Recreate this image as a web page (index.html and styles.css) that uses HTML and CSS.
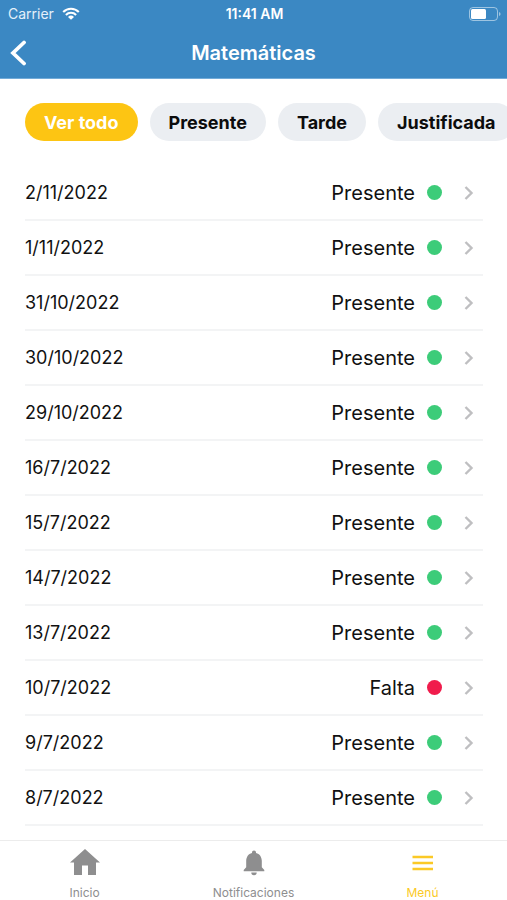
FILE: index.html
```html
<!DOCTYPE html>
<html lang="es">
<head>
<meta charset="utf-8">
<meta name="viewport" content="width=device-width, initial-scale=1">
<title>Matemáticas</title>
<link rel="stylesheet" href="styles.css">
</head>
<body>
<header class="header">
  <div class="status">
    <span class="carrier">Carrier
      <svg class="wifi" viewBox="0 0 18 13" aria-hidden="true"><path d="M1.2 5a11 11 0 0 1 15.6 0M3.9 7.9a7.2 7.2 0 0 1 10.2 0" fill="none" stroke="currentColor" stroke-width="2.1"/><path d="M9 12.8 6 9.9a4.3 4.3 0 0 1 6 0z" fill="currentColor"/></svg>
    </span>
    <span class="time">11:41 AM</span>
    <svg class="battery" viewBox="0 0 32 14" aria-hidden="true"><rect x=".5" y=".5" width="28" height="13" rx="3.5" fill="none" stroke="currentColor" opacity=".5"/><rect x="2" y="2" width="15" height="10" rx="1.5" fill="currentColor"/><path d="M30 5q1.6.5 1.6 2T30 9z" fill="currentColor" opacity=".5"/></svg>
  </div>
  <div class="navbar">
    <button class="back" type="button" aria-label="Volver"><svg viewBox="0 0 16 26" aria-hidden="true"><path d="M14 2.500 3 13l11 10.500" fill="none" stroke="currentColor" stroke-width="3.800" stroke-linecap="round"/></svg></button>
    <h1 class="title">Matemáticas</h1>
  </div>
</header>
<main class="content">
  <div class="chips">
    <button class="chip chip-active" type="button">Ver todo</button>
    <button class="chip" type="button">Presente</button>
    <button class="chip" type="button">Tarde</button>
    <button class="chip" type="button">Justificada</button>
  </div>
  <ul class="list">
    <li><a class="row" href="#"><span class="date">2/11/2022</span><span class="state">Presente</span><span class="dot"></span><svg class="chevron" viewBox="0 0 10 14" aria-hidden="true"><path d="m1.500 1 6 6-6 6"/></svg></a></li>
    <li><a class="row" href="#"><span class="date">1/11/2022</span><span class="state">Presente</span><span class="dot"></span><svg class="chevron" viewBox="0 0 10 14" aria-hidden="true"><path d="m1.500 1 6 6-6 6"/></svg></a></li>
    <li><a class="row" href="#"><span class="date">31/10/2022</span><span class="state">Presente</span><span class="dot"></span><svg class="chevron" viewBox="0 0 10 14" aria-hidden="true"><path d="m1.500 1 6 6-6 6"/></svg></a></li>
    <li><a class="row" href="#"><span class="date">30/10/2022</span><span class="state">Presente</span><span class="dot"></span><svg class="chevron" viewBox="0 0 10 14" aria-hidden="true"><path d="m1.500 1 6 6-6 6"/></svg></a></li>
    <li><a class="row" href="#"><span class="date">29/10/2022</span><span class="state">Presente</span><span class="dot"></span><svg class="chevron" viewBox="0 0 10 14" aria-hidden="true"><path d="m1.500 1 6 6-6 6"/></svg></a></li>
    <li><a class="row" href="#"><span class="date">16/7/2022</span><span class="state">Presente</span><span class="dot"></span><svg class="chevron" viewBox="0 0 10 14" aria-hidden="true"><path d="m1.500 1 6 6-6 6"/></svg></a></li>
    <li><a class="row" href="#"><span class="date">15/7/2022</span><span class="state">Presente</span><span class="dot"></span><svg class="chevron" viewBox="0 0 10 14" aria-hidden="true"><path d="m1.500 1 6 6-6 6"/></svg></a></li>
    <li><a class="row" href="#"><span class="date">14/7/2022</span><span class="state">Presente</span><span class="dot"></span><svg class="chevron" viewBox="0 0 10 14" aria-hidden="true"><path d="m1.500 1 6 6-6 6"/></svg></a></li>
    <li><a class="row" href="#"><span class="date">13/7/2022</span><span class="state">Presente</span><span class="dot"></span><svg class="chevron" viewBox="0 0 10 14" aria-hidden="true"><path d="m1.500 1 6 6-6 6"/></svg></a></li>
    <li><a class="row" href="#"><span class="date">10/7/2022</span><span class="state">Falta</span><span class="dot dot-absent"></span><svg class="chevron" viewBox="0 0 10 14" aria-hidden="true"><path d="m1.500 1 6 6-6 6"/></svg></a></li>
    <li><a class="row" href="#"><span class="date">9/7/2022</span><span class="state">Presente</span><span class="dot"></span><svg class="chevron" viewBox="0 0 10 14" aria-hidden="true"><path d="m1.500 1 6 6-6 6"/></svg></a></li>
    <li><a class="row" href="#"><span class="date">8/7/2022</span><span class="state">Presente</span><span class="dot"></span><svg class="chevron" viewBox="0 0 10 14" aria-hidden="true"><path d="m1.500 1 6 6-6 6"/></svg></a></li>
  </ul>
</main>
<nav class="tabs">
  <a class="tab" href="#"><svg viewBox="0 0 32 28" aria-hidden="true"><path d="M16 1 1 14.500h4V27h8V17.500h6V27h8V14.500h4z" fill="currentColor"/></svg>Inicio</a>
  <a class="tab" href="#"><svg viewBox="0 0 32 28" aria-hidden="true"><path d="M16 2.500c-1.200 0-2 .8-2 1.900v.5c-3.700.9-5.800 4-5.800 7.900v6.400L5.700 22v1.200h20.600V22l-2.500-2.800v-6.400c0-3.900-2.100-7-5.800-7.900v-.5c0-1.100-.8-1.900-2-1.900zM13.300 24.500a2.700 2.700 0 0 0 5.400 0z" fill="currentColor"/></svg>Notificaciones</a>
  <a class="tab tab-active" href="#"><svg viewBox="0 0 32 28" aria-hidden="true"><path d="M5.500 9h20.500M5.500 15h20.500M5.500 21h20.500" fill="none" stroke="currentColor" stroke-width="2.400"/></svg>Menú</a>
</nav>
</body>
</html>
```

FILE: styles.css
```css
* { box-sizing: border-box; }

body {
  margin: 0;
  height: 100vh;
  display: flex;
  flex-direction: column;
  overflow: hidden;
  background: #fff;
  color: #111;
  font-family: Inter, "Liberation Sans", sans-serif;
}

a { color: inherit; text-decoration: none; }
button { border: 0; font: inherit; }
svg { display: block; flex: none; }

.header {
  background: #3b88c3;
  color: #fff;
  border-bottom: 1px solid #72abd8;
}

.status {
  display: grid;
  grid-template-columns: 1fr auto 1fr;
  align-items: center;
  height: 27px;
  padding: 0 6px 0 8px;
  font-size: 14px;
}

.carrier { display: flex; align-items: center; gap: 8px; color: #e4f0fa; }
.wifi { width: 18px; height: 13px; color: #fff; }
.time { font-weight: 600; }
.battery { width: 32px; height: 14px; justify-self: end; }

.navbar {
  display: grid;
  grid-template-columns: 48px 1fr 48px;
  align-items: center;
  height: 51px;
}

.back {
  padding: 0 0 0 10px;
  background: none;
  color: #fff;
}
.back svg { width: 16px; height: 26px; }

.title {
  margin: 0;
  text-align: center;
  font-size: 20px;
  font-weight: 600;
}

.content {
  flex: 1;
  min-height: 0;
  overflow: hidden;
  padding: 24px 24px 0 25px;
}

.chips {
  display: flex;
  gap: 12px;
  margin-right: -24px;
  overflow: hidden;
}

.chip {
  flex: none;
  height: 38px;
  padding: 0 19px;
  border-radius: 19px;
  background: #ebeef2;
  color: #0c0c0c;
  font-size: 18px;
  font-weight: 700;
}
.chip-active { background: #fdc513; color: #fff; }

.list {
  margin: 25px 0 0;
  padding: 0;
  list-style: none;
}

.row {
  display: flex;
  align-items: center;
  height: 55px;
  padding-right: 9px;
  border-bottom: 2px solid #f3f4f5;
}

.date { flex: 1; font-size: 18px; }
.state { font-size: 20px; }
.dot {
  width: 15px;
  height: 15px;
  margin: 0 22px 0 12px;
  border-radius: 50%;
  background: #3dcc79;
}
.dot-absent { background: #f01c4c; }

.chevron {
  width: 10px;
  height: 14px;
  fill: none;
  stroke: #bfbfc1;
  stroke-width: 2.4;
}

.tabs {
  display: grid;
  grid-template-columns: repeat(3, 1fr);
  height: 60px;
  border-top: 1px solid #ececec;
}

.tab {
  display: flex;
  flex-direction: column;
  align-items: center;
  gap: 9px;
  padding-top: 7px;
  color: #8e8e8f;
  font-size: 12px;
  line-height: 16px;
}
.tab svg { width: 32px; height: 28px; }
.tab-active { color: #fbc926; }
```
